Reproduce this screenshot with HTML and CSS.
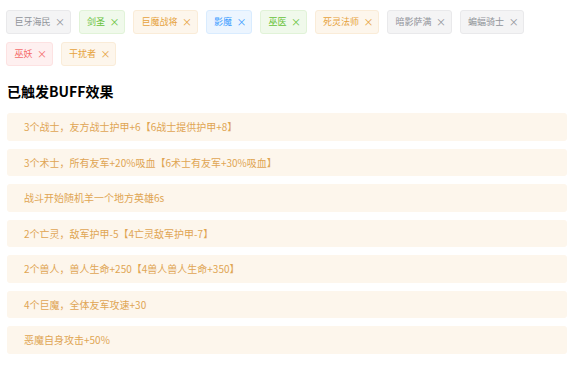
FILE: index.html
```html
<!DOCTYPE html>
<html lang="zh-CN">
<head>
    <meta charset="UTF-8">
    <meta name="viewport" content="width=device-width, initial-scale=1.0">
    <title>羁绊BUFF</title>
    <link rel="stylesheet" href="styles.css">
</head>
<body>
    <div class="hero-tags">
        <span class="tag tag-info">巨牙海民<i class="tag-close">×</i></span>
        <span class="tag tag-success">剑圣<i class="tag-close">×</i></span>
        <span class="tag tag-warning">巨魔战将<i class="tag-close">×</i></span>
        <span class="tag tag-primary">影魔<i class="tag-close">×</i></span>
        <span class="tag tag-success">巫医<i class="tag-close">×</i></span>
        <span class="tag tag-warning">死灵法师<i class="tag-close">×</i></span>
        <span class="tag tag-info">暗影萨满<i class="tag-close">×</i></span>
        <span class="tag tag-info">蝙蝠骑士<i class="tag-close">×</i></span>
        <span class="tag tag-danger">巫妖<i class="tag-close">×</i></span>
        <span class="tag tag-warning">干扰者<i class="tag-close">×</i></span>
    </div>

    <h3 class="buff-title">已触发BUFF效果</h3>

    <div class="buff-list">
        <div class="alert">3个战士，友方战士护甲+6【6战士提供护甲+8】</div>
        <div class="alert">3个术士，所有友军+20%吸血【6术士有友军+30%吸血】</div>
        <div class="alert">战斗开始随机羊一个地方英雄6s</div>
        <div class="alert">2个亡灵，敌军护甲-5【4亡灵敌军护甲-7】</div>
        <div class="alert">2个兽人，兽人生命+250【4兽人兽人生命+350】</div>
        <div class="alert">4个巨魔，全体友军攻速+30</div>
        <div class="alert">恶魔自身攻击+50%</div>
    </div>
</body>
</html>
```

FILE: styles.css
```css
body {
    margin: 0;
    background: #fff;
    font-family: "Noto Sans CJK SC", "Noto Sans", sans-serif;
}
.hero-tags {
    display: flex;
    flex-wrap: wrap;
    gap: 8px 8px;
    padding: 10px 0 0 6px;
    width: 530px;
}
.tag {
    display: inline-flex;
    align-items: center;
    box-sizing: border-box;
    height: 24px;
    padding: 0 7.5px;
    border: 1px solid;
    border-radius: 3px;
    font-size: 9px;
    line-height: 22px;
    white-space: nowrap;
}
.tag-close {
    font-style: normal;
    display: inline-block;
    width: 12px;
    text-align: center;
    font-size: 10px;
    margin-left: 3.5px;
    margin-right: -4px;
}
.tag-info { background: #f4f4f5; border-color: #e9e9eb; color: #909399; }
.tag-success { background: #f0f9eb; border-color: #e1f3d8; color: #67c23a; }
.tag-warning { background: #fdf6ec; border-color: #faecd8; color: #e6a23c; }
.tag-primary { background: #ecf5ff; border-color: #d9ecff; color: #409eff; }
.tag-danger { background: #fef0f0; border-color: #fde2e2; color: #f56c6c; }

.buff-title {
    margin: 15px 0 12px 7px;
    font-size: 14px;
    line-height: 20px;
    font-weight: bold;
    color: #000;
}
.buff-list {
    display: flex;
    flex-direction: column;
    gap: 8px;
    margin-left: 7px;
    width: 560px;
}
.alert {
    box-sizing: border-box;
    height: 27.5px;
    padding: 0 17px;
    display: flex;
    align-items: center;
    background: #fdf6ec;
    color: #e0a553;
    border-radius: 3px;
    font-size: 10px;
}
```
